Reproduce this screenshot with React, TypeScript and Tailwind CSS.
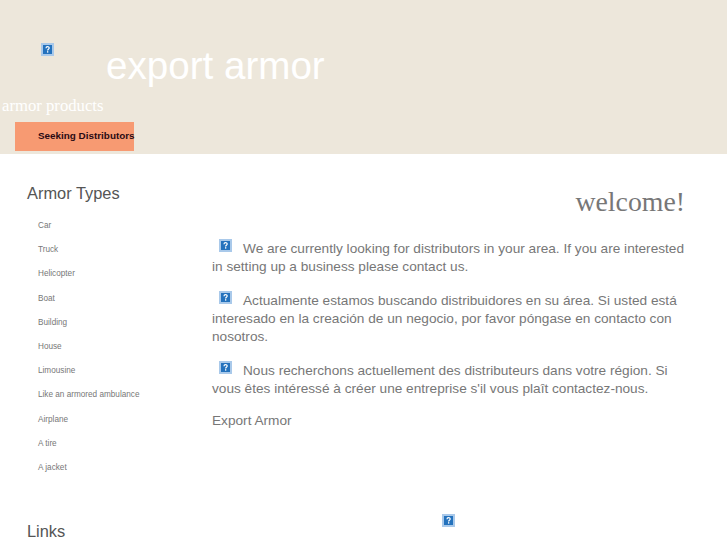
const SANS = "font-['Liberation_Sans',Arial,sans-serif]";
const SERIF = "font-['Liberation_Serif','Times_New_Roman',serif]";

const ARMOR_TYPES = [
  "Car",
  "Truck",
  "Helicopter",
  "Boat",
  "Building",
  "House",
  "Limousine",
  "Like an armored ambulance",
  "Airplane",
  "A tire",
  "A jacket",
];

const PARAGRAPHS = [
  "We are currently looking for distributors in your area. If you are interested in setting up a business please contact us.",
  "Actualmente estamos buscando distribuidores en su área. Si usted está interesado en la creación de un negocio, por favor póngase en contacto con nosotros.",
  "Nous recherchons actuellement des distributeurs dans votre région. Si vous êtes intéressé à créer une entreprise s'il vous plaît contactez-nous.",
];

// Browser's "missing image" placeholder
function MissingImage({ className = "" }: { className?: string }) {
  return (
    <svg viewBox="0 0 13 13" className={`inline-block h-[13px] w-[13px] ${className}`}>
      <rect x="0" y="0" width="13" height="13" fill="#a9c9ea" />
      <rect x="2" y="2" width="9" height="9" fill="#2472bd" />
      <path
        d="M5 5.2c0-2 3.2-2 3.2-.1 0 1.1-1.6 1.2-1.6 2.4"
        fill="none"
        stroke="#fff"
        strokeWidth="1.2"
      />
      <rect x="6" y="8.2" width="1.3" height="1.4" fill="#fff" />
    </svg>
  );
}

export default function App() {
  return (
    <div className={`h-[545px] w-[727px] overflow-hidden bg-white ${SANS}`}>
      {/* Header */}
      <header className="flex h-[154px] flex-col bg-[#ede7db]">
        <div className="flex h-[91px] pt-[43px] pl-[41px]">
          <MissingImage />
          <h1 className="ml-[52px] text-[38.6px] leading-[46px] font-normal text-white">
            export armor
          </h1>
        </div>
        <p className={`pl-[2px] text-[16.7px] leading-[29px] text-white ${SERIF}`}>armor products</p>
        <nav className="mt-[2px] ml-[15px] h-[29px] w-[119px] bg-[#f79a72] pl-[23px] text-[9.9px] leading-[28px] font-bold whitespace-nowrap text-[#2a0a14]">
          Seeking Distributors
        </nav>
      </header>

      <div className="flex">
        {/* Sidebar */}
        <aside className="w-[212px] shrink-0 pt-[29px] pl-[27px]">
          <h2 className="text-[16.4px] leading-[21px] font-normal text-[#555]">Armor Types</h2>
          <ul className="mt-[10px] pl-[11px]">
            {ARMOR_TYPES.map((item) => (
              <li key={item} className="h-[24.2px] text-[8.2px] leading-[24.2px] text-[#777]">
                {item}
              </li>
            ))}
          </ul>
          <h2 className="mt-[41px] text-[16.4px] leading-[21px] font-normal text-[#555]">Links</h2>
        </aside>

        {/* Main content */}
        <main className="w-[480px] pt-[30px]">
          <h2 className={`pr-[7px] text-right text-[27.8px] leading-[36px] font-normal text-[#777] ${SERIF}`}>
            welcome!
          </h2>
          <div className="mt-[20px] flex flex-col gap-[16px] text-[13.65px] leading-[18px] text-[#777]">
            {PARAGRAPHS.map((text) => (
              <p key={text}>
                <MissingImage className="-mt-[3px] mr-[11px] mb-[1px] ml-[7px] align-baseline" />
                {text}
              </p>
            ))}
            <p className="-mt-[2px]">Export Armor</p>
          </div>
          <div className="mt-[78px] pl-[230px]">
            <MissingImage />
          </div>
        </main>
      </div>
    </div>
  );
}
